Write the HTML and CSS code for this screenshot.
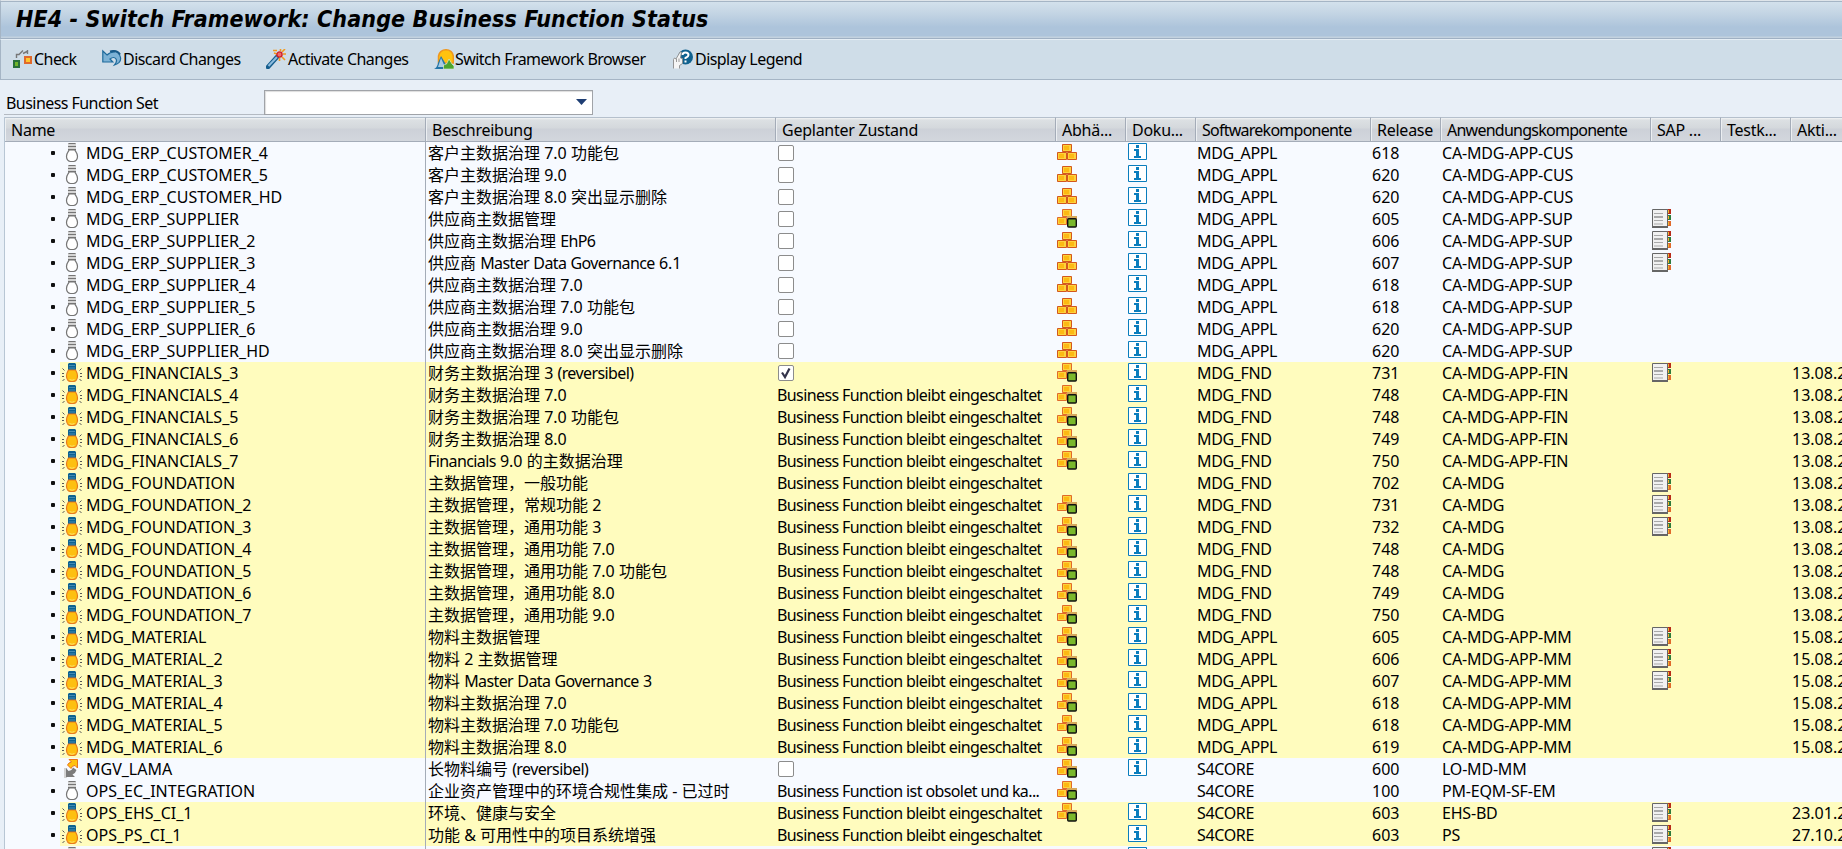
FILE: index.html
```html
<!DOCTYPE html>
<html lang="de">
<head>
    <meta charset="UTF-8">
    <title>HE4 - Switch Framework: Change Business Function Status</title>
    <link rel="stylesheet" href="styles.css">
</head>
<body>
    <svg class="sprite" width="0" height="0">
        <symbol id="bulb-off" viewBox="0 0 20 20">
            <path d="M6 0h8v7H6z" fill="#d4d4d4"/>
            <path d="M6.500 .5h7M6 3.500h8M6 6.500h8" stroke="#757575"/>
            <path d="M7 7C6.500 9 4.500 9.500 4.500 13.500c0 3 2 5 4 5h3c2 0 4-2 4-5 0-4-2-4.500-2.500-6.500z" fill="#fff" stroke="#757575" stroke-width="1.200"/>
        </symbol>
        <symbol id="bulb-on" viewBox="0 0 20 20">
            <path d="M7 0h6l1 1v6H6V1z" fill="#0d6291"/>
            <path d="M7 2.500h6M7 5h6" stroke="#5d9fc0" stroke-width=".7"/>
            <path d="M6.500 7C6 8.500 4.500 9.500 4.500 13c0 3.500 2 5.500 4 5.500h3c2 0 4-2 4-5.500 0-3.500-1.500-4.500-2-6z" fill="#fdc010" stroke="#e9791c" stroke-width="1.200"/>
            <path d="M7.500 16.500q2.500 1.500 5 0" fill="none" stroke="#fde06a"/>
            <path d="M.5 5.500l2 2M0 10.500h2M0 13.500h2M.5 18l2-2M19.500 5.500l-2 2M18 10.500h2M18 13.500h2M19.500 18l-2-2" stroke="#555"/>
        </symbol>
        <symbol id="arrows" viewBox="0 0 20 20">
            <path d="M2 9h3v10H2z" fill="#d3d3d3"/>
            <path d="M7 .5h8.500V9L13 6.500q-3 0-4 3L5.500 6Q6.500 3.500 9.500 3z" fill="#ffc20e" stroke="#e8741c"/>
            <path d="M4 9v9h9l-2.500-2.500q3-1 4-4.500L11 8.500q-1 3-4.500 3.500z" fill="#7c7c7c"/>
        </symbol>
        <symbol id="boxes" viewBox="0 0 20 18">
            <path d="M5.500 1.500h9v7h-9zM.5 9.500h9v7h-9zM10.500 9.500h9v7h-9z" fill="#fdd23c" stroke="#d3571d"/>
            <path d="M7 3h5v4H7zM2 11h5v4H2zM12 11h5v4h-5z" fill="#fdb913"/>
        </symbol>
        <symbol id="boxes-ok" viewBox="0 0 20 20">
            <path d="M5.500 .5h9v7h-9zM.5 8.500h9v7h-9z" fill="#fdd23c" stroke="#e06a2c"/>
            <path d="M7 2h5v4H7zM2 10h5v4H2z" fill="#fdb913"/>
            <path d="M10 7h10v3H10z" fill="#d6a85a"/>
            <rect x="10.700" y="9.700" width="8.600" height="8.300" rx="1" fill="#7ab82c" stroke="#111" stroke-width="1.400"/>
        </symbol>
        <symbol id="info" viewBox="0 0 19 17">
            <path d="M.5 .5h18v16H.5z" fill="#fff" stroke="#0a7dbd"/>
            <path d="M8 2h3v3H8zM6 6h5v7h2v2H6v-2h2V8H6z" fill="#0a7dbd"/>
        </symbol>
        <symbol id="note" viewBox="0 0 19 19">
            <path d="M15 0h4v5h-4z" fill="#b82a18"/>
            <path d="M15 6h4v5h-4z" fill="#2d7b3c"/>
            <path d="M15 12h4v5h-4z" fill="#e0692b"/>
            <path d="M16 1h1v3h-1zM16 7h1v3h-1zM16 13h1v3h-1z" fill="#f4b52c"/>
            <path d="M.5 .5h15v17H.5z" fill="#f1f1f1" stroke="#666"/>
            <path d="M0 17h16v2H0z" fill="#666"/>
            <path d="M2 4.500h9M2 11.500h9M2 15h9" stroke="#a9a9a9"/>
            <path d="M2 8h9" stroke="#a9a9a9" stroke-width="2"/>
        </symbol>
    </svg>

    <header class="titlebar">
        <h1 class="title">HE4 - Switch Framework: Change Business Function Status</h1>
    </header>

    <nav class="toolbar">
        <a class="tool tool-check">
            <svg width="20" height="20" viewBox="0 0 20 20">
                <path d="M3.500 9V5.500h3M6 5.500l4-4M10 4.500l4-2M14.500 1v4" fill="none" stroke="#777" stroke-width="1.400"/>
                <path d="M1 12h5v6H1z" fill="#6fb52c" stroke="#28703a" stroke-width="2"/>
                <path d="M12 8h6v6h-6z" fill="#ffc62c" stroke="#e0692b" stroke-width="2"/>
            </svg>
            <span>Check</span>
        </a>
        <a class="tool tool-discard">
            <svg width="20" height="20" viewBox="0 0 20 20">
                <path d="M.8 2v11h10L8 10q4-3 6 0 1.500 2.500-1.500 6 7-2 6-7.500Q17 1 9.500 2q3 0 3 1Q8 3 5 6z" fill="#7db2d5" stroke="#1f6b9c" stroke-width="1.200"/>
                <path d="M8 2.500q7-2 10 3" fill="none" stroke="#1a5a88" stroke-width="2"/>
            </svg>
            <span>Discard Changes</span>
        </a>
        <a class="tool tool-activate">
            <svg width="20" height="20" viewBox="0 0 20 20">
                <path d="M2 18L11 8" stroke="#145d8d" stroke-width="4.500" stroke-linecap="round"/>
                <path d="M2.500 17L11 8" stroke="#8dbbdd" stroke-width="2"/>
                <path d="M7 1.500h4M14.500 0v2M19 0l-3 3M17 5h3M16 8l3 3M13.500 9v3M8 4l3 1" stroke="#f29a1d" stroke-width="1.600"/>
                <circle cx="13.500" cy="5.500" r="2.600" fill="#ef6b68" stroke="#cf2028" stroke-width="1.300"/>
            </svg>
            <span>Activate Changes</span>
        </a>
        <a class="tool tool-browser">
            <svg width="20" height="20" viewBox="0 0 20 20">
                <path d="M4.500 14V7Q6 .8 12 .8T19.300 7v7z" fill="#ffc20e" stroke="#f0961c" stroke-width="1.500"/>
                <path d="M0 20q3-1 4-6l3-7 3 5 4 8z" fill="#2375a8"/>
                <path d="M4 18L7 9l4 9z" fill="#a9cbe2"/>
                <path d="M9.500 20v-4l3-1 2.500-5 3 5 2 2v3z" fill="#4ba52e" stroke="#eaf3df" stroke-width=".6"/>
            </svg>
            <span>Switch Framework Browser</span>
        </a>
        <a class="tool tool-legend">
            <svg width="20" height="20" viewBox="0 0 20 20">
                <circle cx="12.500" cy="8" r="7.500" fill="#10628f"/>
                <path d="M9.500 6q0-2.500 3-2.500T15.500 6q0 1.500-3 3v1M12.500 11.500v2" fill="none" stroke="#fff" stroke-width="2"/>
                <path d="M.5 19.500v-9l1-1.500 1.500 1 4-7L8.500 3 7.500 9l2 .5v5l-3 2v3" fill="#f5f5f5" stroke="#8a8a8a" stroke-width=".9"/>
                <path d="M3.500 10v3M6 9.500v3.500" stroke="#999"/>
            </svg>
            <span>Display Legend</span>
        </a>
    </nav>

    <main class="content">
        <div class="filter">
            <label class="filter-label">Business Function Set</label>
            <div class="select"><span class="select-arrow"></span></div>
        </div>

        <table class="grid">
            <colgroup>
                <col class="w-name"><col class="w-desc"><col class="w-state"><col class="w-icon"><col class="w-icon">
                <col class="w-soft"><col class="w-icon"><col class="w-app"><col class="w-icon"><col class="w-icon"><col class="w-icon">
            </colgroup>
            <thead>
                <tr>
                    <th>Name</th>
                    <th>Beschreibung</th>
                    <th>Geplanter Zustand</th>
                    <th>Abhä...</th>
                    <th>Doku...</th>
                    <th class="tight">Softwarekomponente</th>
                    <th>Release</th>
                    <th class="tight">Anwendungskomponente</th>
                    <th>SAP ...</th>
                    <th>Testk...</th>
                    <th>Akti...</th>
                </tr>
            </thead>
            <tbody id="rows"></tbody>
        </table>
    </main>

    <script src="script.js"></script>
</body>
</html>
```
FILE: styles.css
```css
* {
    box-sizing: border-box;
}
body {
    margin: 0;
    height: 849px;
    overflow: hidden;
    background-color: #e8eff7;
    color: #000;
    font-family: "Noto Sans", "Noto Sans CJK SC", sans-serif;
    font-size: 16px;
    line-height: 20px;
}
.sprite {
    display: block;
    height: 0;
}
svg {
    display: block;
    flex-shrink: 0;
}
.titlebar {
    height: 39px;
    border-top: 1px solid #dfe5ea;
    border-left: 1px solid #a5b5c5;
    border-bottom: 1px solid #9fb0c3;
    background: linear-gradient(#a5b5c5 0, #a5b5c5 1px, #d3e1ec 1px, #c4d5e4 12px, #adc4db 26px, #adc4db 35px, #c3d2df 36px);
    padding: 0 0 0 15px;
}
.title {
    margin: 0;
    font-family: "DejaVu Sans Condensed", "DejaVu Sans", sans-serif;
    font-stretch: condensed;
    font-size: 23px;
    font-weight: bold;
    font-style: italic;
    line-height: 37px;
    white-space: nowrap;
    letter-spacing: 0.12px;
}
.toolbar {
    height: 41px;
    display: flex;
    align-items: flex-start;
    padding: 9px 0 0 12px;
    border-left: 1px solid #a5b5c5;
    border-bottom: 1px solid #a5b5c5;
    border-top: 1px solid #e5eef5;
    background-color: #cfdde8;
    letter-spacing: -0.55px;
}
.tool {
    display: flex;
    gap: 2px;
    white-space: nowrap;
}
.tool-check { width: 89px; }
.tool-discard { width: 164px; }
.tool-activate { width: 168px; }
.tool-browser { width: 239px; }
.tool-check,
.tool-discard,
.tool-browser {
    gap: 1px;
}
.content {
    padding-left: 4px;
}
.filter {
    display: flex;
    height: 37px;
    padding-top: 10px;
}
.filter-label {
    width: 260px;
    height: 25px;
    padding: 3px 0 0 2px;
    border-bottom: 1px solid #b4bac2;
    letter-spacing: -0.55px;
}
.select {
    display: flex;
    justify-content: flex-end;
    width: 329px;
    height: 25px;
    padding: 8px 5px 0 0;
    border: 1px solid #a0a3a8;
    box-shadow: inset 1px 1px 1px #ddd;
    background-color: #fff;
}
.select-arrow {
    width: 11px;
    height: 6px;
    background-color: #1e3e73;
    clip-path: polygon(0 0, 100% 0, 50% 100%);
}
.grid {
    width: 1856px;
    table-layout: fixed;
    border-collapse: separate;
    border-spacing: 0;
    border-left: 1px solid #b8c6d4;
    background-color: #f7faff;
}
.w-name { width: 421px; }
.w-desc { width: 350px; }
.w-state { width: 280px; }
.w-icon { width: 70px; }
.w-soft { width: 175px; }
.w-app { width: 210px; }
.grid th {
    height: 25px;
    padding: 1px 0 0 6px;
    border-top: 1px solid #b5c0cc;
    border-right: 1px solid #a4acb8;
    border-bottom: 1px solid #a4acb8;
    background: linear-gradient(#f2f4f5 0, #dce0e3 2px, #d4d8dc 10px, #cdd1d8 11px, #d3d7dd 100%);
    box-shadow: inset 1px 0 #eceff2;
    font-weight: normal;
    text-align: left;
    white-space: nowrap;
    letter-spacing: -0.25px;
}
.grid th.tight {
    letter-spacing: -0.75px;
}
.grid td {
    height: 22px;
    padding: 1px 0 0 1px;
    white-space: nowrap;
    vertical-align: top;
}
.grid .name {
    padding: 0;
    border-right: 1px solid #a4acb8;
}
.name-inner {
    display: flex;
}
.bullet {
    width: 4px;
    height: 4px;
    margin: 9px 5px 0 46px;
    border-radius: 1px;
    background-color: #111;
}
.name-text {
    display: flex;
    flex: 1;
    gap: 4px;
    height: 22px;
    padding: 1px 0 0 2px;
}
.on td,
.on .name-text {
    background-color: #fffcbe;
}
.on .name {
    background-color: #f7faff;
}
.grid .desc {
    padding-left: 2px;
}
.latin,
.state {
    letter-spacing: -0.6px;
}
.soft {
    letter-spacing: -0.35px;
}
.app {
    letter-spacing: -0.2px;
}
.grid .doc {
    padding-left: 2px;
}
.check {
    width: 16px;
    height: 16px;
    margin: 2px 0 0 1px;
    border: 1px solid #8c8c8c;
    border-radius: 2px;
    background-color: #fff;
}
```
FILE: script.js
```js
// name, icon, description, planned state, dependency icon, info, component, release, application, note, date
var STAYS = 'Business Function bleibt eingeschaltet';
var rows = [
    ['MDG_ERP_CUSTOMER_4', 'off', '客户主数据治理 7.0 功能包', '', 'boxes', 1, 'MDG_APPL', '618', 'CA-MDG-APP-CUS', 0, ''],
    ['MDG_ERP_CUSTOMER_5', 'off', '客户主数据治理 9.0', '', 'boxes', 1, 'MDG_APPL', '620', 'CA-MDG-APP-CUS', 0, ''],
    ['MDG_ERP_CUSTOMER_HD', 'off', '客户主数据治理 8.0 突出显示删除', '', 'boxes', 1, 'MDG_APPL', '620', 'CA-MDG-APP-CUS', 0, ''],
    ['MDG_ERP_SUPPLIER', 'off', '供应商主数据管理', '', 'boxes-ok', 1, 'MDG_APPL', '605', 'CA-MDG-APP-SUP', 1, ''],
    ['MDG_ERP_SUPPLIER_2', 'off', '供应商主数据治理 EhP6', '', 'boxes', 1, 'MDG_APPL', '606', 'CA-MDG-APP-SUP', 1, ''],
    ['MDG_ERP_SUPPLIER_3', 'off', '供应商 Master Data Governance 6.1', '', 'boxes', 1, 'MDG_APPL', '607', 'CA-MDG-APP-SUP', 1, ''],
    ['MDG_ERP_SUPPLIER_4', 'off', '供应商主数据治理 7.0', '', 'boxes', 1, 'MDG_APPL', '618', 'CA-MDG-APP-SUP', 0, ''],
    ['MDG_ERP_SUPPLIER_5', 'off', '供应商主数据治理 7.0 功能包', '', 'boxes', 1, 'MDG_APPL', '618', 'CA-MDG-APP-SUP', 0, ''],
    ['MDG_ERP_SUPPLIER_6', 'off', '供应商主数据治理 9.0', '', 'boxes', 1, 'MDG_APPL', '620', 'CA-MDG-APP-SUP', 0, ''],
    ['MDG_ERP_SUPPLIER_HD', 'off', '供应商主数据治理 8.0 突出显示删除', '', 'boxes', 1, 'MDG_APPL', '620', 'CA-MDG-APP-SUP', 0, ''],
    ['MDG_FINANCIALS_3', 'on', '财务主数据治理 3 (reversibel)', 'x', 'boxes-ok', 1, 'MDG_FND', '731', 'CA-MDG-APP-FIN', 1, '13.08.2'],
    ['MDG_FINANCIALS_4', 'on', '财务主数据治理 7.0', STAYS, 'boxes-ok', 1, 'MDG_FND', '748', 'CA-MDG-APP-FIN', 0, '13.08.2'],
    ['MDG_FINANCIALS_5', 'on', '财务主数据治理 7.0 功能包', STAYS, 'boxes-ok', 1, 'MDG_FND', '748', 'CA-MDG-APP-FIN', 0, '13.08.2'],
    ['MDG_FINANCIALS_6', 'on', '财务主数据治理 8.0', STAYS, 'boxes-ok', 1, 'MDG_FND', '749', 'CA-MDG-APP-FIN', 0, '13.08.2'],
    ['MDG_FINANCIALS_7', 'on', 'Financials 9.0 的主数据治理', STAYS, 'boxes-ok', 1, 'MDG_FND', '750', 'CA-MDG-APP-FIN', 0, '13.08.2'],
    ['MDG_FOUNDATION', 'on', '主数据管理，一般功能', STAYS, '', 1, 'MDG_FND', '702', 'CA-MDG', 1, '13.08.2'],
    ['MDG_FOUNDATION_2', 'on', '主数据管理，常规功能 2', STAYS, 'boxes-ok', 1, 'MDG_FND', '731', 'CA-MDG', 1, '13.08.2'],
    ['MDG_FOUNDATION_3', 'on', '主数据管理，通用功能 3', STAYS, 'boxes-ok', 1, 'MDG_FND', '732', 'CA-MDG', 1, '13.08.2'],
    ['MDG_FOUNDATION_4', 'on', '主数据管理，通用功能 7.0', STAYS, 'boxes-ok', 1, 'MDG_FND', '748', 'CA-MDG', 0, '13.08.2'],
    ['MDG_FOUNDATION_5', 'on', '主数据管理，通用功能 7.0 功能包', STAYS, 'boxes-ok', 1, 'MDG_FND', '748', 'CA-MDG', 0, '13.08.2'],
    ['MDG_FOUNDATION_6', 'on', '主数据管理，通用功能 8.0', STAYS, 'boxes-ok', 1, 'MDG_FND', '749', 'CA-MDG', 0, '13.08.2'],
    ['MDG_FOUNDATION_7', 'on', '主数据管理，通用功能 9.0', STAYS, 'boxes-ok', 1, 'MDG_FND', '750', 'CA-MDG', 0, '13.08.2'],
    ['MDG_MATERIAL', 'on', '物料主数据管理', STAYS, 'boxes-ok', 1, 'MDG_APPL', '605', 'CA-MDG-APP-MM', 1, '15.08.2'],
    ['MDG_MATERIAL_2', 'on', '物料 2 主数据管理', STAYS, 'boxes-ok', 1, 'MDG_APPL', '606', 'CA-MDG-APP-MM', 1, '15.08.2'],
    ['MDG_MATERIAL_3', 'on', '物料 Master Data Governance 3', STAYS, 'boxes-ok', 1, 'MDG_APPL', '607', 'CA-MDG-APP-MM', 1, '15.08.2'],
    ['MDG_MATERIAL_4', 'on', '物料主数据治理 7.0', STAYS, 'boxes-ok', 1, 'MDG_APPL', '618', 'CA-MDG-APP-MM', 0, '15.08.2'],
    ['MDG_MATERIAL_5', 'on', '物料主数据治理 7.0 功能包', STAYS, 'boxes-ok', 1, 'MDG_APPL', '618', 'CA-MDG-APP-MM', 0, '15.08.2'],
    ['MDG_MATERIAL_6', 'on', '物料主数据治理 8.0', STAYS, 'boxes-ok', 1, 'MDG_APPL', '619', 'CA-MDG-APP-MM', 0, '15.08.2'],
    ['MGV_LAMA', 'arrows', '长物料编号 (reversibel)', '', 'boxes-ok', 1, 'S4CORE', '600', 'LO-MD-MM', 0, ''],
    ['OPS_EC_INTEGRATION', 'off', '企业资产管理中的环境合规性集成 - 已过时', 'Business Function ist obsolet und ka...', 'boxes-ok', 0, 'S4CORE', '100', 'PM-EQM-SF-EM', 0, ''],
    ['OPS_EHS_CI_1', 'on', '环境、健康与安全', STAYS, 'boxes-ok', 1, 'S4CORE', '603', 'EHS-BD', 1, '23.01.2'],
    ['OPS_PS_CI_1', 'on', '功能 & 可用性中的项目系统增强', STAYS, '', 1, 'S4CORE', '603', 'PS', 1, '27.10.2'],
    ['', 'off', '', ' ', '', 1, '', '', '', 1, '']
];

function icon(id, w, h) {
    return '<svg width="' + w + '" height="' + h + '"><use href="#' + id + '"/></svg>';
}

function state(value) {
    if (value === '') return '<div class="check"></div>';
    if (value === 'x') {
        return '<div class="check"><svg width="14" height="14" viewBox="0 0 14 14">' +
            '<path d="M3 6.500l3 4.500L10.500 2.500" fill="none" stroke="#33334a" stroke-width="2.200"/></svg></div>';
    }
    return value;
}

function desc(text) {
    return text.replace(/[A-Za-z()]{3,}/g, '<span class="latin">$&</span>').replace(' & ', ' &amp; ');
}

document.getElementById('rows').innerHTML = rows.map(function (r) {
    var bulb = r[1] === 'arrows' ? 'arrows' : 'bulb-' + r[1];
    return '<tr class="' + r[1] + '">' +
        '<td class="name"><div class="name-inner"><span class="bullet"></span>' +
        '<div class="name-text">' + icon(bulb, 20, 20) + '<span>' + r[0] + '</span></div></div></td>' +
        '<td class="desc">' + desc(r[2]) + '</td>' +
        '<td class="state">' + state(r[3]) + '</td>' +
        '<td>' + (r[4] ? icon(r[4], 20, r[4] === 'boxes' ? 18 : 20) : '') + '</td>' +
        '<td class="doc">' + (r[5] ? icon('info', 19, 17) : '') + '</td>' +
        '<td class="soft">' + r[6] + '</td>' +
        '<td>' + r[7] + '</td>' +
        '<td class="app">' + r[8] + '</td>' +
        '<td>' + (r[9] ? icon('note', 19, 19) : '') + '</td>' +
        '<td></td>' +
        '<td>' + r[10] + '</td></tr>';
}).join('');
```
